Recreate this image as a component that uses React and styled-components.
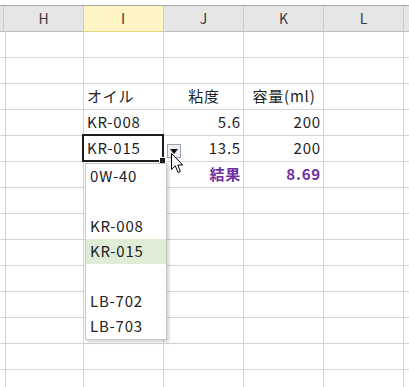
import React from "react";
import styled, { createGlobalStyle, css } from "styled-components";

const GlobalStyle = createGlobalStyle`
  html, body {
    margin: 0;
    padding: 0;
    background: #ffffff;
    overflow: hidden;
  }
  body {
    font-family: "Noto Sans CJK JP", "Noto Sans", sans-serif;
    color: #1f1f1f;
  }
`;

const Sheet = styled.div`
  padding-top: 5px;
  width: 409px;
  height: 387px;
  box-sizing: border-box;
  overflow: hidden;
`;

const Grid = styled.div`
  display: grid;
  grid-template-columns: 4px repeat(5, 80px) 1fr;
  grid-auto-rows: 26px;
  border-top: 1px solid #a6a6a6;
`;

const HeadCell = styled.div`
  box-sizing: border-box;
  display: flex;
  align-items: center;
  justify-content: center;
  padding-bottom: 1px;
  background: #e6e6e6;
  border-right: 1px solid #cdcdcd;
  border-bottom: 1px solid #bdbdbd;
  font-size: 14px;
  color: #3a3a3a;
  ${(p) =>
    p.$active &&
    css`
      background: #fff4c4;
      border-bottom-color: #e4d27a;
      box-shadow: inset 1px 0 0 #e4d27a;
      margin-left: -1px;
    `}
`;

const Cell = styled.div`
  position: relative;
  box-sizing: border-box;
  display: flex;
  align-items: center;
  justify-content: ${(p) =>
    p.$align === "right" ? "flex-end" : p.$align === "center" ? "center" : "flex-start"};
  padding: 0 2px 2px 3px;
  border-right: 1px solid #d4d4d4;
  border-bottom: 1px solid #d4d4d4;
  font-size: 15px;
  letter-spacing: 0.8px;
  white-space: nowrap;
  color: #1f1f1f;
  ${(p) =>
    p.$result &&
    css`
      color: #7030a0;
      font-weight: 700;
    `}
`;

const Selection = styled.div`
  position: absolute;
  top: -2px;
  left: -2px;
  right: -1px;
  bottom: -1px;
  border: 2px solid #1c1c1c;
  pointer-events: none;
`;

const FillHandle = styled.div`
  position: absolute;
  right: -4px;
  bottom: -4px;
  width: 5px;
  height: 5px;
  background: #1c1c1c;
  border: 1px solid #ffffff;
`;

const ArrowButton = styled.div`
  position: absolute;
  left: 83px;
  top: 8px;
  width: 14px;
  height: 14px;
  box-sizing: border-box;
  border: 1px solid #9aa3b0;
  background: #eef0f3;
  display: flex;
  align-items: center;
  justify-content: center;
  z-index: 3;
`;

const Cursor = styled.svg`
  position: absolute;
  left: 87px;
  top: 17px;
  z-index: 4;
`;

const DropList = styled.ul`
  position: absolute;
  left: 1px;
  top: 27px;
  width: 82px;
  margin: 0;
  padding: 0;
  list-style: none;
  box-sizing: border-box;
  background: #ffffff;
  border: 1px solid #c8c8c8;
  box-shadow: 2px 2px 3px rgba(0, 0, 0, 0.18);
  z-index: 2;
`;

const DropItem = styled.li`
  height: 25px;
  box-sizing: border-box;
  display: flex;
  align-items: center;
  padding: 0 0 2px 4px;
  font-size: 15px;
  letter-spacing: 0.8px;
  color: #222222;
  background: ${(p) => (p.$hot ? "#dfecd6" : "transparent")};
`;

const columns = ["", "H", "I", "J", "K", "L", ""];

const rows = [
  [],
  [],
  [null, null, { text: "オイル" }, { text: "粘度", align: "center" }, { text: "容量(ml)", align: "center" }],
  [null, null, { text: "KR-008" }, { text: "5.6", align: "right" }, { text: "200", align: "right" }],
  [null, null, { text: "KR-015", selected: true }, { text: "13.5", align: "right" }, { text: "200", align: "right" }],
  [null, null, null, { text: "結果", align: "right", result: true }, { text: "8.69", align: "right", result: true }],
  [], [], [], [], [], [], [], [],
];

const options = ["0W-40", "", "KR-008", "KR-015", "", "LB-702", "LB-703"];

const Dropdown = () => (
  <>
    <Selection>
      <FillHandle />
    </Selection>
    <ArrowButton>
      <svg width="8" height="5" viewBox="0 0 8 5">
        <path d="M0 0 H8 L4 5 Z" fill="#111" />
      </svg>
    </ArrowButton>
    <Cursor width="13" height="21" viewBox="0 0 13 21">
      <path
        d="M0.5 0.5 L0.5 16.5 L4.3 12.8 L7 19.5 L9.4 18.5 L6.8 12 L11.8 12 Z"
        fill="#ffffff"
        stroke="#000000"
        strokeWidth="1"
        strokeLinejoin="miter"
      />
    </Cursor>
    <DropList>
      {options.map((o, i) => (
        <DropItem key={i} $hot={o === "KR-015"}>
          {o}
        </DropItem>
      ))}
    </DropList>
  </>
);

export default function App() {
  return (
    <>
      <GlobalStyle />
      <Sheet>
        <Grid>
          {columns.map((c, i) => (
            <HeadCell key={"h" + i} $active={c === "I"}>
              {c}
            </HeadCell>
          ))}
          {rows.map((row, r) =>
            columns.map((_, c) => {
              const cell = row[c];
              return (
                <Cell
                  key={r + "-" + c}
                  $align={cell?.align}
                  $result={cell?.result}
                  style={cell?.selected ? { zIndex: 2 } : undefined}
                >
                  {cell?.text}
                  {cell?.selected && <Dropdown />}
                </Cell>
              );
            })
          )}
        </Grid>
      </Sheet>
    </>
  );
}
